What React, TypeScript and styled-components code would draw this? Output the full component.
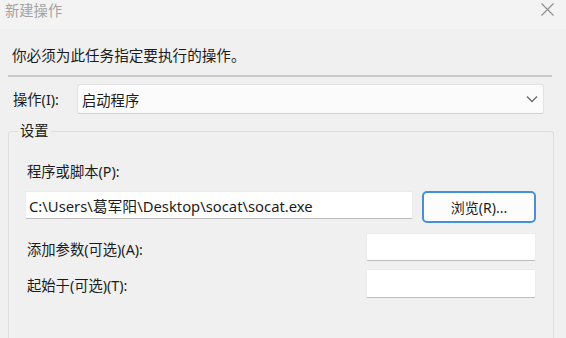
import React from "react";
import styled, { createGlobalStyle } from "styled-components";

const GlobalStyle = createGlobalStyle`
  html, body {
    margin: 0;
    padding: 0;
    background: #f0f0f0;
  }
  body {
    font-family: "Noto Sans", "Noto Sans CJK SC", sans-serif;
    color: #1b1b1b;
  }
`;

const Window = styled.div`
  width: 566px;
  height: 338px;
  overflow: hidden;
  display: flex;
  flex-direction: column;
  background: #f0f0f0;
`;

const TitleBar = styled.div`
  height: 29px;
  flex-shrink: 0;
  display: flex;
  justify-content: space-between;
  align-items: flex-start;
  padding: 0 12px 0 5px;
  background: #f3f3f3;
`;

const Title = styled.span`
  font-size: 14.3px;
  line-height: 22px;
  color: #a3a3a3;
`;

const CloseButton = styled.span`
  display: flex;
  padding-top: 3px;
`;

const Body = styled.div`
  flex: 1;
  display: flex;
  flex-direction: column;
  padding: 0 12px 0 8px;
`;

const Instruction = styled.div`
  margin-top: 16px;
  padding-left: 4px;
  font-size: 14.6px;
  line-height: 20px;
`;

const Divider = styled.div`
  margin-top: 10px;
  margin-right: 2px;
  height: 2px;
  background: #c9c9c9;
`;

const ActionRow = styled.div`
  margin-top: 7px;
  display: flex;
  align-items: center;
  padding-right: 10px;
`;

const Label = styled.span`
  font-size: 14.3px;
  line-height: 20px;
  white-space: nowrap;
`;

const ActionLabel = styled(Label)`
  width: 64px;
  padding-left: 5px;
  padding-top: 2px;
`;

const Select = styled.div`
  flex: 1;
  height: 30px;
  box-sizing: border-box;
  display: flex;
  align-items: center;
  justify-content: space-between;
  padding: 0 5px 0 4px;
  background: #fbfbfb;
  border: 1px solid #e2e2e2;
  border-bottom-color: #d2d2d2;
  border-radius: 3px;
  font-size: 14.3px;
`;

const Group = styled.fieldset`
  margin: 7px 0 0 0;
  padding: 0 17px 0 16px;
  flex: 1;
  border: 1px solid #dedede;
  border-bottom: none;
  border-radius: 3px 3px 0 0;
  display: flex;
  flex-direction: column;
`;

const Legend = styled.legend`
  margin-left: -7px;
  padding: 0 2px;
  font-size: 14.3px;
  line-height: 20px;
`;

const FieldLabel = styled(Label)`
  display: block;
  margin-top: 21px;
  padding-left: 2px;
`;

const PathRow = styled.div`
  margin-top: 9px;
  display: flex;
  align-items: flex-start;
  gap: 9px;
`;

const TextBox = styled.div<{ $width?: number; $height?: number }>`
  ${(p) => (p.$width ? `width: ${p.$width}px;` : "flex: 1;")}
  height: ${(p) => p.$height ?? 28}px;
  box-sizing: border-box;
  display: flex;
  align-items: center;
  padding: 0 3px;
  background: #ffffff;
  border: 1px solid #ececec;
  border-bottom: 1px solid #bdbdbd;
  border-radius: 2px;
  font-size: 14.8px;
  white-space: nowrap;
  overflow: hidden;
`;

const BrowseButton = styled.button`
  width: 114px;
  height: 32px;
  flex-shrink: 0;
  padding: 0;
  background: #fdfdfd;
  border: 2px solid #4291dd;
  border-radius: 5px;
  font-family: inherit;
  font-size: 14px;
  color: #1b1b1b;
`;

const OptionRow = styled.div<{ $gap: number }>`
  margin-top: ${(p) => p.$gap}px;
  display: flex;
  align-items: center;
  justify-content: space-between;
`;

const OptionLabel = styled(Label)`
  padding-left: 2px;
  padding-top: 5px;
`;

const CloseIcon = () => (
  <svg width="13" height="13" viewBox="0 0 13 13">
    <path d="M0.5 0.5 L12.5 12.5 M12.5 0.5 L0.5 12.5" stroke="#8e8e8e" strokeWidth="1.1" fill="none" />
  </svg>
);

const Chevron = () => (
  <svg width="12" height="8" viewBox="0 0 12 8">
    <path d="M1 1.5 L6 6.5 L11 1.5" stroke="#6e6e6e" strokeWidth="1.4" fill="none" />
  </svg>
);

export default function App() {
  return (
    <>
      <GlobalStyle />
      <Window>
        <TitleBar>
          <Title>新建操作</Title>
          <CloseButton>
            <CloseIcon />
          </CloseButton>
        </TitleBar>
        <Body>
          <Instruction>你必须为此任务指定要执行的操作。</Instruction>
          <Divider />
          <ActionRow>
            <ActionLabel>操作(I):</ActionLabel>
            <Select>
              <span>启动程序</span>
              <Chevron />
            </Select>
          </ActionRow>
          <Group>
            <Legend>设置</Legend>
            <FieldLabel>程序或脚本(P):</FieldLabel>
            <PathRow>
              <TextBox>C:\Users\葛军阳\Desktop\socat\socat.exe</TextBox>
              <BrowseButton>浏览(R)...</BrowseButton>
            </PathRow>
            <OptionRow $gap={10}>
              <OptionLabel>添加参数(可选)(A):</OptionLabel>
              <TextBox $width={170} />
            </OptionRow>
            <OptionRow $gap={8}>
              <OptionLabel>起始于(可选)(T):</OptionLabel>
              <TextBox $width={170} $height={29} />
            </OptionRow>
          </Group>
        </Body>
      </Window>
    </>
  );
}
